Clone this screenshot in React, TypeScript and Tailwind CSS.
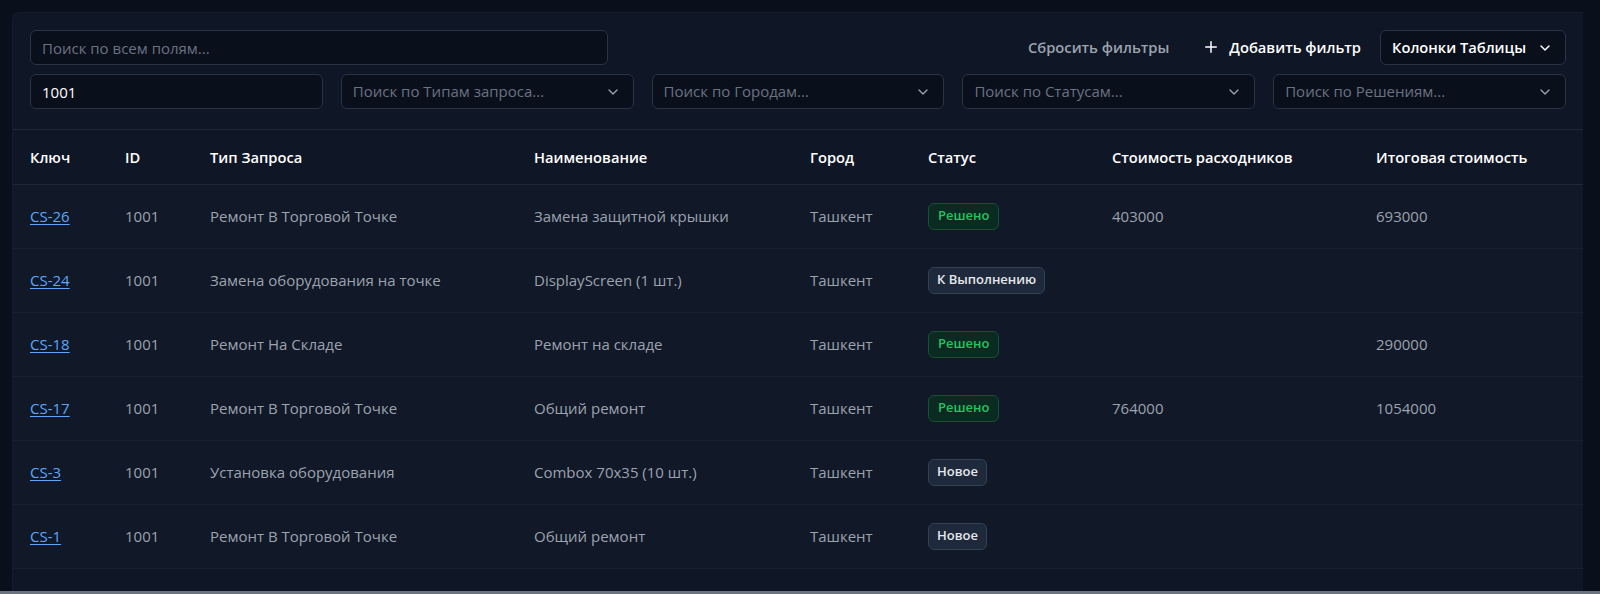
import { ChevronDown, Plus } from 'lucide-react';

interface Row {
  key: string;
  id: string;
  type: string;
  name: string;
  city: string;
  status: 'done' | 'todo' | 'new';
  parts?: string;
  total?: string;
}

const rows: Row[] = [
  { key: 'CS-26', id: '1001', type: 'Ремонт В Торговой Точке', name: 'Замена защитной крышки', city: 'Ташкент', status: 'done', parts: '403000', total: '693000' },
  { key: 'CS-24', id: '1001', type: 'Замена оборудования на точке', name: 'DisplayScreen (1 шт.)', city: 'Ташкент', status: 'todo' },
  { key: 'CS-18', id: '1001', type: 'Ремонт На Складе', name: 'Ремонт на складе', city: 'Ташкент', status: 'done', total: '290000' },
  { key: 'CS-17', id: '1001', type: 'Ремонт В Торговой Точке', name: 'Общий ремонт', city: 'Ташкент', status: 'done', parts: '764000', total: '1054000' },
  { key: 'CS-3', id: '1001', type: 'Установка оборудования', name: 'Combox 70x35 (10 шт.)', city: 'Ташкент', status: 'new' },
  { key: 'CS-1', id: '1001', type: 'Ремонт В Торговой Точке', name: 'Общий ремонт', city: 'Ташкент', status: 'new' },
];

const columns = [
  { label: 'Ключ', width: 'w-[95px]' },
  { label: 'ID', width: 'w-[85px]' },
  { label: 'Тип Запроса', width: 'w-[324px]' },
  { label: 'Наименование', width: 'w-[276px]' },
  { label: 'Город', width: 'w-[118px]' },
  { label: 'Статус', width: 'w-[184px]' },
  { label: 'Стоимость расходников', width: 'w-[264px]' },
  { label: 'Итоговая стоимость', width: 'w-auto' },
];

const StatusBadge = ({ status }: { status: Row['status'] }) => {
  if (status === 'done') {
    return (
      <span className="inline-flex h-[27px] items-center rounded-md border border-[#14532d] bg-[#0b2a22] px-[9px] text-[13px] font-semibold text-[#22c55e]">
        Решено
      </span>
    );
  }
  return (
    <span className="inline-flex h-[27px] items-center rounded-md border border-[#334155] bg-[#1e293b] px-[8px] text-[13px] font-semibold text-[#e5e7eb]">
      {status === 'todo' ? 'К Выполнению' : 'Новое'}
    </span>
  );
};

const SelectBox = ({ placeholder }: { placeholder: string }) => (
  <div className="flex h-[35px] items-center justify-between rounded-md border border-[#2a3344] bg-[#0a0f1c] pl-[11px] pr-[12px]">
    <span className="text-[15px] text-[#6b7280]">{placeholder}</span>
    <ChevronDown className="h-4 w-4 text-[#9ca3af]" strokeWidth={2} />
  </div>
);

export default function App() {
  return (
    <div
      className="flex h-[594px] flex-col overflow-hidden bg-[#0a0f1c] text-[15px]"
      style={{ fontFamily: '"Open Sans", "Noto Sans", sans-serif' }}
    >
      <div className="ml-3 mr-[17px] mt-3 flex-1 overflow-hidden rounded-tl-lg border-l border-t border-[#151d2c] bg-[#0f1626]">
        <div className="border-b border-[#1f2937] px-[17px] pb-[20px] pt-[17px]">
          <div className="flex items-center justify-between">
            <input
              className="h-[35px] w-[578px] rounded-md border border-[#2a3344] bg-[#0a0f1c] px-[11px] text-[15px] text-white outline-none placeholder:text-[#6b7280]"
              placeholder="Поиск по всем полям..."
            />
            <div className="flex items-center">
              <button className="mr-[33px] text-[14.7px] font-semibold text-[#9ca3af]">Сбросить фильтры</button>
              <button className="mr-[19px] flex items-center gap-[9px] text-[14.7px] font-semibold text-white">
                <Plus className="h-[18px] w-[18px]" strokeWidth={2} />
                Добавить фильтр
              </button>
              <button className="flex h-[35px] w-[186px] items-center justify-between rounded-md border border-[#2a3344] bg-[#0a0f1c] pl-[11px] pr-[12px] text-[14.7px] font-semibold text-white">
                Колонки Таблицы
                <ChevronDown className="h-4 w-4" strokeWidth={2.2} />
              </button>
            </div>
          </div>
          <div className="mt-[9px] grid grid-cols-5 gap-[18px]">
            <input
              className="h-[35px] rounded-md border border-[#2a3344] bg-[#0a0f1c] px-[11px] text-[15px] font-medium text-white outline-none"
              defaultValue="1001"
            />
            <SelectBox placeholder="Поиск по Типам запроса..." />
            <SelectBox placeholder="Поиск по Городам..." />
            <SelectBox placeholder="Поиск по Статусам..." />
            <SelectBox placeholder="Поиск по Решениям..." />
          </div>
        </div>

        <table className="w-full table-fixed border-collapse">
          <thead>
            <tr className="h-[54px] border-b border-[#1f2937]">
              {columns.map((c) => (
                <th key={c.label} className={`${c.width} pl-[17px] text-left text-[14.7px] font-semibold text-white`}>
                  {c.label}
                </th>
              ))}
            </tr>
          </thead>
          <tbody className="bg-[#111827]">
            {rows.map((r) => (
              <tr key={r.key} className="h-[64px] border-b border-[#162031] text-[#9ca3af]">
                <td className="pl-[17px]">
                  <a href="#" className="text-[#60a5fa] underline underline-offset-2">
                    {r.key}
                  </a>
                </td>
                <td className="pl-[17px]">{r.id}</td>
                <td className="pl-[17px]">{r.type}</td>
                <td className="pl-[17px]">{r.name}</td>
                <td className="pl-[17px]">{r.city}</td>
                <td className="pl-[17px]">
                  <StatusBadge status={r.status} />
                </td>
                <td className="pl-[17px]">{r.parts}</td>
                <td className="pl-[17px]">{r.total}</td>
              </tr>
            ))}
          </tbody>
        </table>
      </div>
      <div className="h-[3px] bg-[#6b7280]" />
    </div>
  );
}
